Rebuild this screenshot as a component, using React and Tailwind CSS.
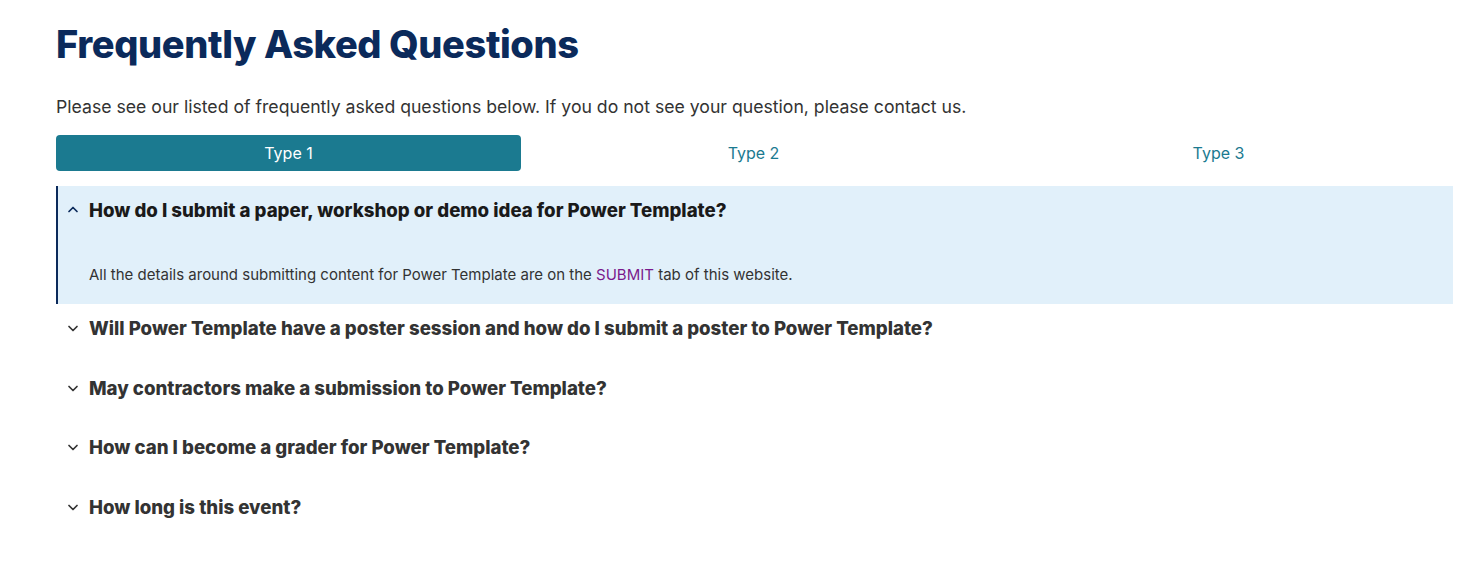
import { useState } from "react";

const questions = [
  {
    q: "How do I submit a paper, workshop or demo idea for Power Template?",
    a: (
      <>
        All the details around submitting content for Power Template are on the{" "}
        <a href="#" className="text-[#7a1a8c]">
          SUBMIT
        </a>{" "}
        tab of this website.
      </>
    ),
  },
  { q: "Will Power Template have a poster session and how do I submit a poster to Power Template?" },
  { q: "May contractors make a submission to Power Template?" },
  { q: "How can I become a grader for Power Template?" },
  { q: "How long is this event?" },
];

function Chevron({ up }) {
  return (
    <svg
      width="14"
      height="14"
      viewBox="0 0 14 14"
      fill="none"
      stroke="currentColor"
      strokeWidth="1.7"
      strokeLinecap="round"
      strokeLinejoin="round"
      className={up ? "text-[#0b2a5b]" : "text-[#333333]"}
    >
      {up ? <path d="M3 8.5 7 4.5l4 4" /> : <path d="M3 5.5 7 9.5l4-4" />}
    </svg>
  );
}

export default function App() {
  const [tab, setTab] = useState(0);
  const [open, setOpen] = useState(0);

  return (
    <div className="bg-white min-h-screen pl-14 pr-[29px] pt-[20px] font-['Inter',sans-serif] text-[#333333]">
      <h1 className="text-[38px] leading-[48px] font-extrabold text-[#0b2a5b] tracking-[-0.4px]">
        Frequently Asked Questions
      </h1>
      <p className="mt-[26px] text-[17.65px] leading-[26px]">
        Please see our listed of frequently asked questions below. If you do not see your question, please contact us.
      </p>

      <div className="mt-[15px] pr-[2px] grid grid-cols-3">
        {["Type 1", "Type 2", "Type 3"].map((t, i) => (
          <button
            key={t}
            onClick={() => setTab(i)}
            className={
              "h-9 rounded text-[16px] " +
              (tab === i ? "bg-[#1b7a90] text-white" : "bg-transparent text-[#1b7a90]")
            }
          >
            {t}
          </button>
        ))}
      </div>

      <div className="mt-[15px] flex flex-col">
        {questions.map((item, i) => {
          const isOpen = open === i;
          return (
            <div
              key={i}
              className={
                isOpen
                  ? "bg-[#e1f0fa] border-l-2 border-[#0b2a5b] pb-[17px]"
                  : "border-l-2 border-transparent"
              }
            >
              <button
                onClick={() => setOpen(isOpen ? -1 : i)}
                className="w-full flex items-center gap-[9px] pl-[8px] h-[48px] text-left"
              >
                <Chevron up={isOpen} />
                <span
                  className={
                    "text-[18.65px] leading-[26px] font-extrabold " +
                    (isOpen ? "text-[#1a1a1a]" : "text-[#333333]")
                  }
                >
                  {item.q}
                </span>
              </button>
              {isOpen && item.a && (
                <div className="pl-[31px] pt-[29px] text-[15px] leading-[24px] text-[#333333]">
                  {item.a}
                </div>
              )}
              {!isOpen && <div className="h-[11.67px]" />}
            </div>
          );
        })}
      </div>
    </div>
  );
}
